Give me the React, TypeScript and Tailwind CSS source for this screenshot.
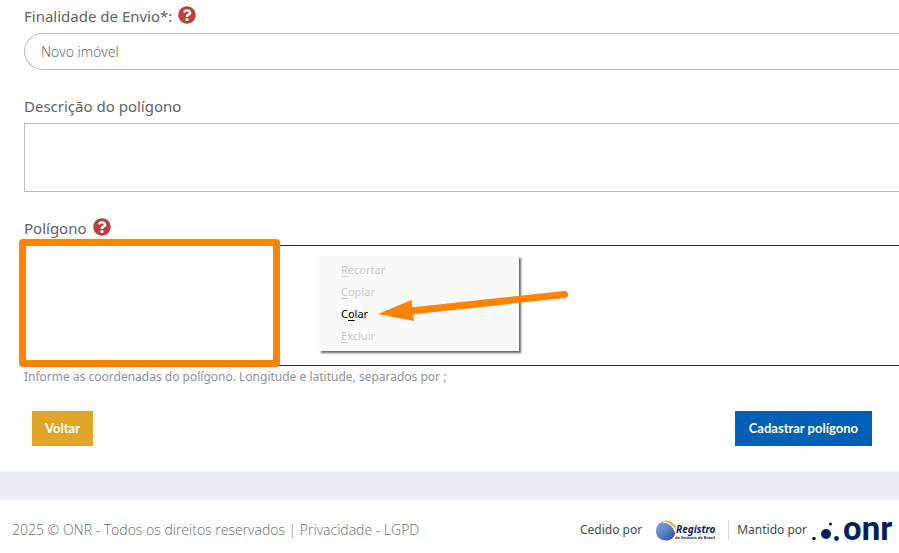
import { ReactNode } from 'react';
import { FaQuestionCircle } from 'react-icons/fa';

const menuItems = [
  { before: '', key: 'R', after: 'ecortar', enabled: false },
  { before: '', key: 'C', after: 'opiar', enabled: false },
  { before: 'C', key: 'o', after: 'lar', enabled: true },
  { before: '', key: 'E', after: 'xcluir', enabled: false },
];

function Field({ id, label, help, children }: { id: string; label: string; help?: boolean; children: ReactNode }) {
  return (
    <div className="relative">
      <div className="mb-[5px] flex h-6 items-center gap-1.5">
        <label htmlFor={id} className="font-['Noto_Sans',sans-serif] text-[15px] text-[#5f6265]">{label}</label>
        {help && (
          <button type="button" aria-label="Ajuda" className="-mt-0.5 text-[#b5443f]">
            <FaQuestionCircle className="h-[18px] w-[18px]" />
          </button>
        )}
      </div>
      {children}
    </div>
  );
}

function ContextMenu() {
  return (
    <div className="absolute top-10 left-[295px] w-[200px] border-r-4 border-b-4 border-white bg-[#fafafa] pt-[3px] font-['Noto_Sans',sans-serif] text-[11px] shadow-[2px_2px_2px_rgba(0,0,0,0.6)]">
      {menuItems.map((item) => (
        <button
          key={item.key}
          type="button"
          disabled={!item.enabled}
          className="block h-[22px] w-full pl-[22px] text-left text-black disabled:text-[#c8c8c8]"
        >
          {item.before}
          <span className="underline underline-offset-2">{item.key}</span>
          {item.after}
        </button>
      ))}
    </div>
  );
}

function Arrow() {
  return (
    <svg className="pointer-events-none absolute top-[72px] left-[354px]" width="192" height="36" viewBox="0 0 192 36" fill="#ff8300" aria-hidden="true">
      <path d="M0 26 L33.500 12 L36 33 Z" />
      <path d="M33 23 L186.500 6.500" stroke="#ff8300" strokeWidth="7" strokeLinecap="round" />
    </svg>
  );
}

function RegistroLogo() {
  return (
    <svg width="62" height="24" viewBox="0 0 62 24" role="img" aria-label="Registro de Imóveis do Brasil">
      <defs>
        <linearGradient id="globe" x1="0" y1="0" x2="1" y2="1">
          <stop offset="0" stopColor="#7fa9dc" />
          <stop offset="0.5" stopColor="#5482c4" />
          <stop offset="1" stopColor="#22469a" />
        </linearGradient>
      </defs>
      <path d="M4 5 C11 2 17 7 19.500 15 C18 20 14.500 22.500 10 22.500 C4 22.500 0 18.500 0 13 C0 9.500 1.500 6.500 4 5 Z" fill="url(#globe)" />
      <path d="M5 4 C10 1 17 2.500 20 8.500 L19.500 11.500 C16 6 11 3.500 5 4 Z" fill="#efbd27" />
      <path d="M7 4.200 C13 4.500 18 9 19.500 15" fill="none" stroke="#fff" strokeWidth="1" />
      <text x="20" y="15" fontFamily="Noto Sans, sans-serif" fontSize="10" fontWeight="700" fontStyle="italic" fill="#12204f">Registro</text>
      <text x="19" y="21" fontFamily="Noto Sans, sans-serif" fontSize="4" fontWeight="700" fill="#12204f">de Imóveis do Brasil</text>
    </svg>
  );
}

function OnrLogo() {
  return (
    <svg className="ml-1" width="84" height="42" viewBox="0 -8 84 42" role="img" aria-label="onr" fill="#00205f">
      <circle cx="3" cy="21.500" r="1.800" />
      <circle cx="15" cy="17" r="5" />
      <circle cx="19.500" cy="7" r="1.600" />
      <circle cx="25.500" cy="21.500" r="2.400" />
      <text x="32" y="23" fontFamily="Roboto, sans-serif" fontSize="33" fontWeight="700">onr</text>
    </svg>
  );
}

export default function App() {
  return (
    <div className="overflow-x-hidden bg-white font-['Open_Sans',sans-serif]">
      <main>
        <form className="pt-1 pb-[25px]">
          <div className="flex flex-col gap-6 pl-6">
            <Field id="finalidade" label="Finalidade de Envio*:" help>
              <select id="finalidade" className="block h-[37px] w-full appearance-none rounded-l-full border border-r-0 border-[#b9bbbe] bg-white pl-4 text-sm font-light text-[#55595c]">
                <option>Novo imóvel</option>
              </select>
            </Field>

            <Field id="descricao" label="Descrição do polígono">
              <textarea id="descricao" className="block h-[69px] w-full resize-none border border-r-0 border-[#b9bbbe]" />
            </Field>

            <Field id="poligono" label="Polígono" help>
              <textarea id="poligono" aria-describedby="poligono-dica" className="block h-[121px] w-full resize-none border border-r-0 border-[#2b2b2b]" />
              <p id="poligono-dica" className="mt-0.5 font-['Noto_Sans',sans-serif] text-xs leading-[18px] text-[#8d9498]">
                Informe as coordenadas do polígono. Longitude e latitude, separados por ;
              </p>
              <div className="pointer-events-none absolute top-[23px] -left-[5px] h-32 w-[261px] rounded border-[7px] border-[#ff8300]" />
              <ContextMenu />
              <Arrow />
            </Field>
          </div>

          <div className="mt-[25px] flex justify-between pr-[27px] pl-8 font-['Lato',sans-serif] text-[13px] font-bold text-white">
            <button type="button" className="h-[35px] bg-[#dfa62a] px-[13px]">Voltar</button>
            <button type="submit" className="h-[35px] bg-[#0060b6] px-3.5">Cadastrar polígono</button>
          </div>
        </form>
      </main>

      <div className="h-[29px] bg-[#ebeef2]" />

      <footer className="flex items-center justify-between pt-[9px] pr-1 pb-0.5 pl-3">
        <p className="text-sm font-light text-[#6a6c6f]">
          2025 © ONR - Todos os direitos reservados | <a href="#privacidade">Privacidade - LGPD</a>
        </p>
        <div className="flex items-center font-['Noto_Sans',sans-serif] text-xs leading-5 text-[#43484d]">
          <span className="mr-3.5">Cedido por</span>
          <RegistroLogo />
          <span className="ml-2.5 border-l border-[#d5d8dc] pl-2">Mantido por</span>
          <OnrLogo />
        </div>
      </footer>
    </div>
  );
}
